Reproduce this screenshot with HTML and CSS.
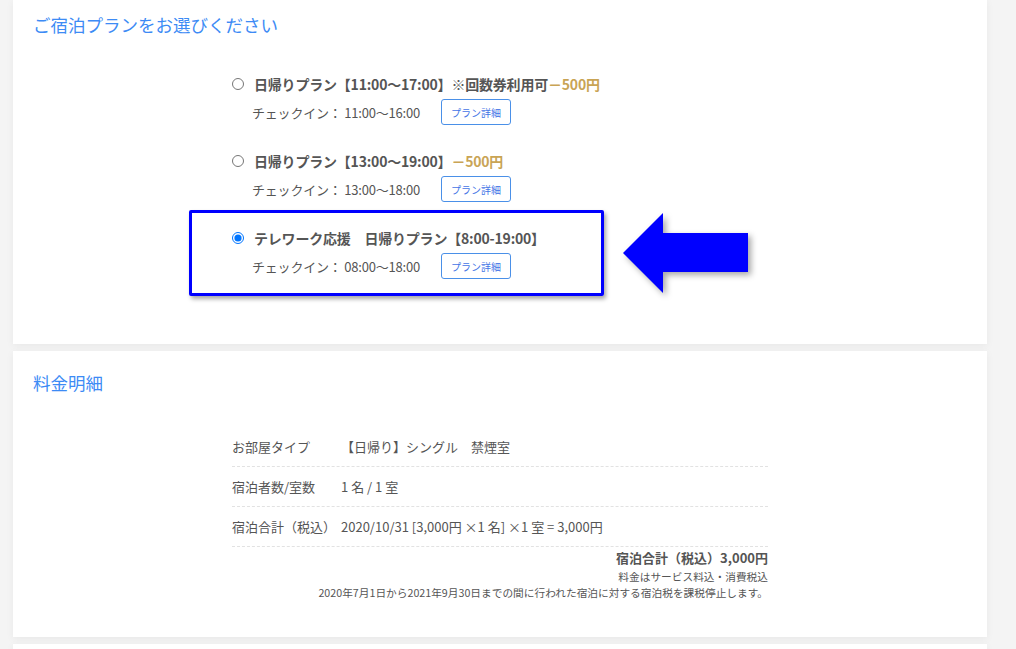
FILE: index.html
```html
<!DOCTYPE html>
<html lang="ja">
<head>
  <meta charset="UTF-8">
  <title>ご宿泊プラン</title>
  <link rel="stylesheet" href="styles.css">
</head>
<body>

  <div class="card card-plans">
    <h2 class="card-title">ご宿泊プランをお選びください</h2>

    <div class="inner">
      <div class="plan">
        <label class="plan-title"><input type="radio" name="plan"> 日帰りプラン【11:00～17:00】※回数券利用可<span class="discount">－500円</span></label>
        <div class="plan-checkin">
          <span>チェックイン： 11:00～16:00</span>
          <button class="btn-detail">プラン詳細</button>
        </div>
      </div>

      <div class="plan">
        <label class="plan-title"><input type="radio" name="plan"> 日帰りプラン【13:00～19:00】<span class="discount">－500円</span></label>
        <div class="plan-checkin">
          <span>チェックイン： 13:00～18:00</span>
          <button class="btn-detail">プラン詳細</button>
        </div>
      </div>

      <div class="plan plan-selected">
        <label class="plan-title"><input type="radio" name="plan" checked> テレワーク応援　日帰りプラン【8:00-19:00】</label>
        <div class="plan-checkin">
          <span>チェックイン： 08:00～18:00</span>
          <button class="btn-detail">プラン詳細</button>
        </div>
        <!-- 注釈 -->
        <div class="mark-box"></div>
        <svg class="mark-arrow" width="135" height="90" viewBox="0 0 135 90">
          <polygon points="0,40 40,0 40,20 125,20 125,59 40,59 40,80" fill="#0000ff"/>
        </svg>
      </div>
    </div>
  </div>

  <div class="card card-price">
    <h2 class="card-title">料金明細</h2>

    <div class="inner">
      <div class="price-row">
        <div class="price-label">お部屋タイプ</div>
        <div class="price-value">【日帰り】シングル　禁煙室</div>
      </div>
      <div class="price-row">
        <div class="price-label">宿泊者数/室数</div>
        <div class="price-value">1 名 / 1 室</div>
      </div>
      <div class="price-row">
        <div class="price-label">宿泊合計（税込）</div>
        <div class="price-value">2020/10/31 [3,000円 ×1 名] ×1 室 = 3,000円</div>
      </div>

      <div class="price-total">宿泊合計（税込）3,000円</div>
      <div class="price-note">料金はサービス料込・消費税込</div>
      <div class="price-note">2020年7月1日から2021年9月30日までの間に行われた宿泊に対する宿泊税を課税停止します。</div>
    </div>
  </div>

  <div class="card card-next"></div>

</body>
</html>
```

FILE: styles.css
```css
body, html {
  margin: 0;
  padding: 0;
}

body {
  background: #f4f4f4;
  font-family: "Noto Sans CJK JP", "Noto Sans", sans-serif;
  color: #555;
  width: 974px;
  padding: 0 13px;
}

.card {
  background: #fff;
  box-shadow: 0 2px 8px rgba(0, 0, 0, 0.05);
  margin-bottom: 7px;
}

.card-title {
  margin: 0;
  padding-left: 20px;
  font-size: 17.5px;
  line-height: 24px;
  font-weight: normal;
  color: #3d8bf5;
}

.inner {
  width: 536px;
  margin: 0 auto;
}

/* プラン */
.card-plans {
  padding: 13px 0 65px;
  height: 266px;
}

.card-plans .inner {
  margin-top: 37px;
}

.plan {
  margin-bottom: 26px;
}

.plan-selected {
  position: relative;
  margin-top: 2px;
}

.plan-title {
  display: flex;
  align-items: center;
  font-size: 14px;
  line-height: 20px;
  font-weight: bold;
  letter-spacing: -0.2px;
  color: #555;
  margin-bottom: 5px;
}

.plan-title input {
  width: 12px;
  height: 12px;
  margin: 0 10px 0 0;
}

.discount {
  color: #c9a455;
}

.plan-checkin {
  display: flex;
  align-items: center;
  padding-left: 20px;
  font-size: 13px;
  letter-spacing: -0.2px;
  height: 26px;
}

.btn-detail {
  margin-left: 21px;
  width: 70px;
  height: 26px;
  padding: 0;
  background: #fff;
  border: 1px solid #4a90e8;
  border-radius: 3px;
  color: #4474e6;
  font-family: inherit;
  font-size: 10px;
  letter-spacing: 0;
}

.mark-box {
  position: absolute;
  left: -43px;
  top: -18px;
  width: 409px;
  height: 80px;
  border: 3px solid #0000ff;
  border-radius: 2px;
  box-shadow: 2px 3px 4px rgba(0, 0, 0, 0.35);
}

.mark-arrow {
  position: absolute;
  left: 391px;
  top: -15px;
  filter: drop-shadow(3px 3px 3px rgba(0, 0, 0, 0.35));
}

/* 料金明細 */
.card-price {
  padding: 20px 0 34px;
  height: 232px;
}

.card-price .inner {
  margin-top: 32px;
}

.price-row {
  display: flex;
  align-items: center;
  height: 39px;
  border-bottom: 1px dashed #e2e2e2;
  font-size: 13px;
}

.price-label {
  width: 109px;
}

.price-total {
  text-align: right;
  font-size: 13px;
  font-weight: bold;
  line-height: 20px;
  margin-top: 1px;
}

.price-note {
  text-align: right;
  font-size: 10.7px;
  line-height: 16px;
}

.price-total + .price-note {
  margin-top: 1px;
}

.card-next {
  height: 40px;
}
```
